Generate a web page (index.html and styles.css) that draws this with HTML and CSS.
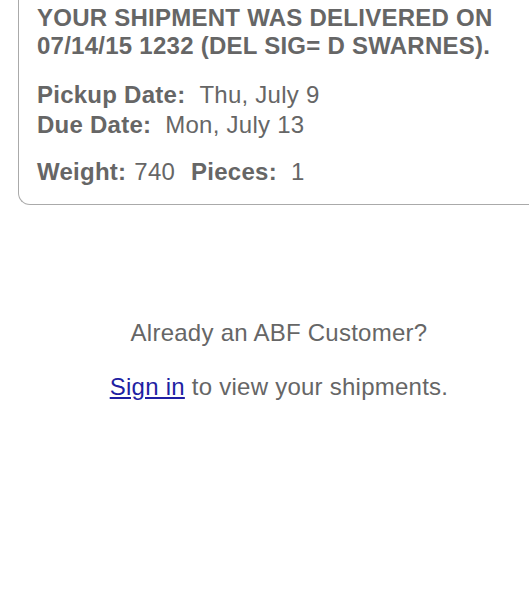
FILE: index.html
```html
<!DOCTYPE html>
<html lang="en">
<head>
    <meta charset="UTF-8">
    <meta name="viewport" content="width=device-width, initial-scale=1.0">
    <title>Shipment Status</title>
    <link rel="stylesheet" href="styles.css">
</head>
<body>
    <div class="card">
        <h2 class="status">YOUR SHIPMENT WAS DELIVERED ON 07/14/15 1232 (DEL SIG= D SWARNES).</h2>

        <div class="group dates">
            <div class="row"><span class="label">Pickup Date:</span>Thu, July 9</div>
            <div class="row"><span class="label">Due Date:</span>Mon, July 13</div>
        </div>

        <div class="group totals">
            <div class="row"><span class="label">Weight:</span><span class="value">740</span><span class="label pieces">Pieces:</span>1</div>
        </div>
    </div>

    <div class="signin">
        <p>Already an ABF Customer?</p>
        <p><a href="#">Sign in</a> to view your shipments.</p>
    </div>
</body>
</html>
```

FILE: styles.css
```css
body { font-family: "Liberation Sans", Arial, sans-serif; margin: 0; padding: 0; background: #fff; color: #666; font-size: 24px; line-height: 28px; letter-spacing: 0.25px; }
.card { margin-left: 18px; padding: 4px 0 18px 18px; border: 1px solid #aaa; border-top: 0; border-right: 0; border-radius: 0 0 0 12px; }
.status { margin: 0; font-size: 24px; font-weight: bold; line-height: 28px; }
.label { font-weight: bold; }
.dates { margin-top: 20px; line-height: 30px; }
.dates .label { margin-right: 14px; }
.totals { margin-top: 18px; }
.totals .label { margin-right: 8px; }
.totals .pieces { margin-right: 14px; }
.value { margin-right: 16px; }
.signin { margin-top: 114px; padding-left: 29px; text-align: center; }
.signin p { margin: 0 0 26px; }
.signin a { color: #1f1fa3; }
```
